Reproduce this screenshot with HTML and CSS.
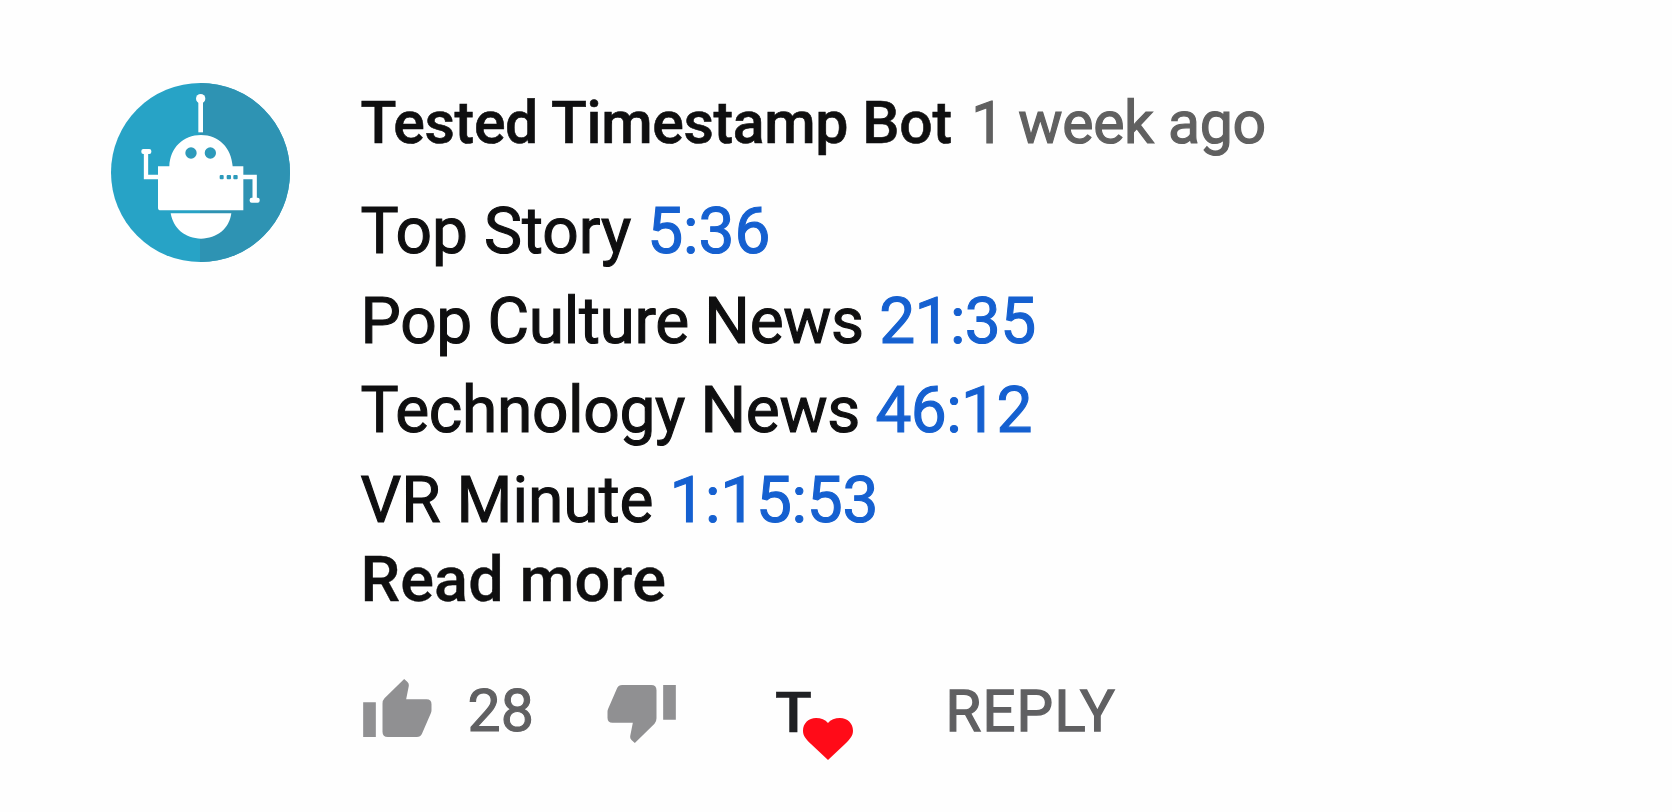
FILE: index.html
```html
<!DOCTYPE html>
<html lang="en">
<head>
<meta charset="utf-8">
<title>Comment</title>
<link rel="stylesheet" href="styles.css">
</head>
<body>
<article class="comment">
  <svg class="avatar" viewBox="33 40 537 537" aria-hidden="true">
    <defs>
      <clipPath id="disc"><circle cx="301.500" cy="308.500" r="268.500"/></clipPath>
    </defs>
    <g clip-path="url(#disc)">
      <rect x="33" y="40" width="537" height="537" fill="#27a3c6"/>
      <rect x="300" y="40" width="270" height="537" fill="#2e93b3"/>
    </g>
    <g fill="#fff">
      <circle cx="302" cy="87" r="14"/>
      <rect x="295" y="95" width="14" height="93"/>
      <path d="M174 290H208C210 234 250 196 303 196S394 234 398 290H430V422H182Q174 422 174 414Z"/>
      <path d="M212 431H394C388 477 350 507 303 507S220 477 212 431Z"/>
      <rect x="124" y="238" width="30" height="15" rx="6"/>
      <rect x="449" y="384" width="30" height="15" rx="6"/>
    </g>
    <path d="M138 248V322H176M428 322H464V390" fill="none" stroke="#fff" stroke-width="13"/>
    <g fill="#2c9abb">
      <circle cx="273" cy="250" r="17"/>
      <circle cx="331" cy="250" r="17"/>
      <rect x="359" y="316" width="12" height="13" rx="3"/>
      <rect x="380" y="316" width="13" height="13" rx="3"/>
      <rect x="400" y="316" width="13" height="13" rx="3"/>
    </g>
  </svg>
  <div class="main">
    <header class="header">
      <span class="author">Tested Timestamp Bot</span>
      <span class="age">1 week ago</span>
    </header>
    <div class="body">
      <div>Top Story <a class="time">5:36</a></div>
      <div class="tight">Pop Culture News <a class="time">21:35</a></div>
      <div class="tight">Technology News <a class="time">46:12</a></div>
      <div class="snug">VR Minute <a class="time">1:15:53</a></div>
    </div>
    <div class="more">Read more</div>
    <div class="actions">
      <svg class="thumb" viewBox="0 0 206 174"><path d="M0 70H38V174H0ZM58 74Q58 64 64 58L123 0L133 9Q138 14 137 20L129 61H190Q205 61 205 76V94Q205 99 203 103L176 165Q172 174 161 174H74Q58 174 58 158Z"/></svg>
      <span class="count">28</span>
      <svg class="thumb thumb-down" viewBox="0 0 206 174"><path d="M0 70H38V174H0ZM58 74Q58 64 64 58L123 0L133 9Q138 14 137 20L129 61H190Q205 61 205 76V94Q205 99 203 103L176 165Q172 174 161 174H74Q58 174 58 158Z"/></svg>
      <span class="creator"><span class="initial">T</span><svg class="heart" viewBox="0 0 150 126"><path d="M75 126L24 78C8 62 0 53 0 38C0 16 17 0 39 0C54 0 67 5 75 15C83 5 96 0 111 0C133 0 150 16 150 38C150 53 142 62 126 78Z"/></svg></span>
      <span class="reply">REPLY</span>
    </div>
  </div>
</article>
</body>
</html>
```
FILE: styles.css
```css
body {
  margin: 0;
  background: #fefefe;
  font-family: Roboto, "Liberation Sans", sans-serif;
  color: #0f0f10;
}
.comment {
  display: flex;
  box-sizing: border-box;
  height: 812px;
  padding: 83px 0 0 111px;
}
.avatar {
  width: 179px;
  height: 179px;
  flex: none;
}
.main {
  margin-left: 70.5px;
  white-space: nowrap;
}
.header {
  display: flex;
  gap: 19.5px;
  height: 80px;
  line-height: 80px;
  font-size: 59px;
}
.author {
  font-weight: 500;
  letter-spacing: -0.36px;
  -webkit-text-stroke: 0.6px;
}
.age {
  color: #606060;
  letter-spacing: -0.36px;
  -webkit-text-stroke: 1.2px;
}
.body {
  margin-top: 24px;
  font-size: 64px;
  line-height: 89.6px;
  -webkit-text-stroke: 1.1px;
}
.tight { letter-spacing: -0.34px; }
.snug { letter-spacing: 0; }
.tight .time { letter-spacing: -0.6px; }
.snug .time { letter-spacing: -0.3px; }
.time { color: #1560d0; }
.more {
  font-size: 63px;
  font-weight: 500;
  line-height: 70px;
  letter-spacing: 0.1px;
  -webkit-text-stroke: 0.4px;
}
.actions {
  display: flex;
  height: 80px;
  margin: 55px 0 0 2px;
  line-height: 82px;
  color: #606062;
}
.thumb {
  width: 69px;
  height: 58px;
  margin-top: 9px;
  fill: #909092;
  flex: none;
}
.thumb-down {
  margin-top: 15px;
  transform: rotate(180deg);
}
.count {
  width: 139px;
  margin-left: 36px;
  font-size: 59px;
  -webkit-text-stroke: 1.1px;
}
.creator {
  position: relative;
  width: 100px;
  margin-left: 99px;
  color: #202124;
  font-size: 56px;
  font-weight: 500;
}
.initial {
  display: inline-block;
  line-height: 86px;
  transform: scaleX(1.08);
  transform-origin: left;
  -webkit-text-stroke: 0.6px;
}
.heart {
  position: absolute;
  left: 28px;
  top: 48px;
  width: 50px;
  height: 42px;
  fill: #ff0b18;
}
.reply {
  margin-left: 71px;
  font-size: 58px;
  letter-spacing: 1.2px;
  -webkit-text-stroke: 1.3px;
}
```
